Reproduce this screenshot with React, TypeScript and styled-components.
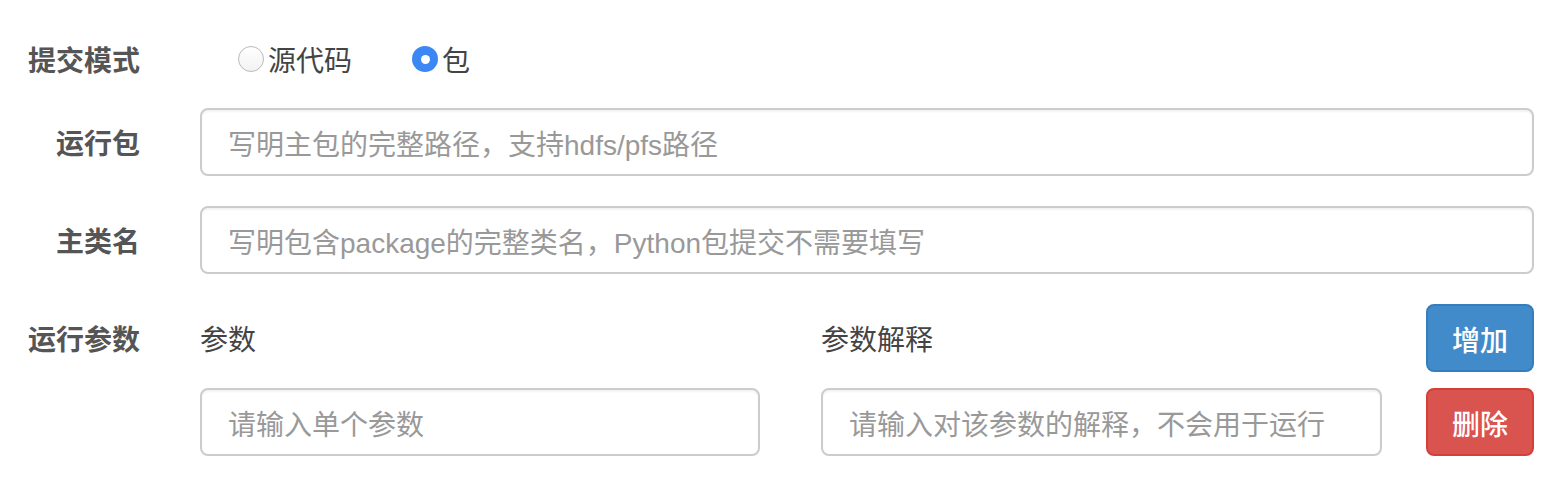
import styled, {createGlobalStyle} from "styled-components";

const GlobalStyle = createGlobalStyle`
  body {
    margin: 0;
    background: #fff;
    font-family: "Liberation Sans", "Noto Sans CJK SC", sans-serif;
    color: #333;
  }
`;

const Form = styled.form`
  width: 1534px;
  padding-top: 25px;
  display: flex;
  flex-direction: column;
`;

const Row = styled.div<{$gap: number}>`
  display: grid;
  grid-template-columns: 140px 1fr;
  column-gap: 60px;
  align-items: center;
  margin-bottom: ${p => p.$gap}px;
`;

const Label = styled.label`
  box-sizing: border-box;
  height: 68px;
  padding-top: 6px;
  line-height: 62px;
  text-align: right;
  font-size: 28px;
  font-weight: bold;
  color: #555;
`;

const RadioGroup = styled.div`
  display: flex;
  align-items: center;
  gap: 60px;
  padding-left: 38px;
  height: 68px;
`;

const RadioOption = styled.span`
  display: flex;
  align-items: center;
  gap: 4px;
  font-size: 28px;
  color: #444;
`;

const RadioDot = styled.span<{$checked?: boolean}>`
  box-sizing: border-box;
  width: 26px;
  height: 26px;
  border-radius: 50%;
  display: flex;
  align-items: center;
  justify-content: center;
  background: ${p => p.$checked ? "#3b88f5" : "linear-gradient(#fff, #f2f2f2)"};
  border: ${p => p.$checked ? "none" : "1.5px solid #b9b9b9"};

  &::after {
    content: "";
    display: ${p => p.$checked ? "block" : "none"};
    width: 9px;
    height: 9px;
    border-radius: 50%;
    background: #fff;
  }
`;

const TextInput = styled.input`
  box-sizing: border-box;
  width: 100%;
  height: 68px;
  padding: 8px 26px 0;
  border: 2px solid #ccc;
  border-radius: 8px;
  font-family: inherit;
  font-size: 28px;
  color: #555;
  outline: none;
  box-shadow: inset 0 2px 2px rgba(0, 0, 0, 0.05);

  &::placeholder {
    color: #999;
  }
`;

const ParamsGrid = styled.div`
  display: grid;
  grid-template-columns: 621px 605px 108px;
  grid-auto-rows: 68px;
  row-gap: 16px;
  align-items: center;
`;

const ColumnTitle = styled.span`
  font-size: 28px;
  color: #444;
`;

const ParamInput = styled(TextInput)<{$width: number}>`
  width: ${p => p.$width}px;
`;

const Button = styled.button<{$variant: "primary" | "danger"}>`
  box-sizing: border-box;
  width: 108px;
  height: 68px;
  padding: 2px 0 0;
  border-radius: 8px;
  font-family: inherit;
  font-size: 28px;
  font-weight: 500;
  color: #fff;
  cursor: pointer;
  background: ${p => p.$variant === "primary" ? "#428bca" : "#d9534f"};
  border: 2px solid ${p => p.$variant === "primary" ? "#357ebd" : "#d43f3a"};
`;

const ParamsLabel = styled(Label)`
  align-self: start;
`;

export default function App() {
  return (
    <>
      <GlobalStyle/>
      <Form>
        <Row $gap={15}>
          <Label>提交模式</Label>
          <RadioGroup>
            <RadioOption><RadioDot/>源代码</RadioOption>
            <RadioOption><RadioDot $checked/>包</RadioOption>
          </RadioGroup>
        </Row>
        <Row $gap={30}>
          <Label>运行包</Label>
          <TextInput placeholder="写明主包的完整路径，支持hdfs/pfs路径"/>
        </Row>
        <Row $gap={30}>
          <Label>主类名</Label>
          <TextInput placeholder="写明包含package的完整类名，Python包提交不需要填写"/>
        </Row>
        <Row $gap={0}>
          <ParamsLabel>运行参数</ParamsLabel>
          <ParamsGrid>
            <ColumnTitle>参数</ColumnTitle>
            <ColumnTitle>参数解释</ColumnTitle>
            <Button type="button" $variant="primary">增加</Button>
            <ParamInput $width={560} placeholder="请输入单个参数"/>
            <ParamInput $width={561} placeholder="请输入对该参数的解释，不会用于运行"/>
            <Button type="button" $variant="danger">删除</Button>
          </ParamsGrid>
        </Row>
      </Form>
    </>
  );
}
